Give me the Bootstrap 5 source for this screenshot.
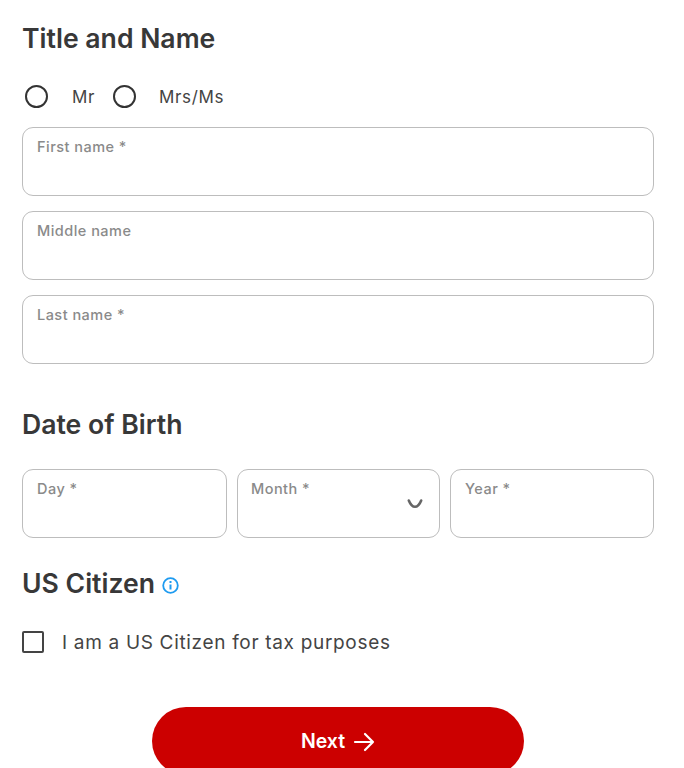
<!doctype html>
<html lang="en"><head><meta charset="utf-8"><title>Form</title>
<link href="https://cdn.jsdelivr.net/npm/bootstrap@5.3.0/dist/css/bootstrap.min.css" rel="stylesheet">
<style>
html,body{height:768px;overflow:hidden}
body{font-family:Inter,"Liberation Sans",sans-serif;color:#333;background:#fff}
.page-wrap{width:632px;margin-left:22px;padding-top:20px}
.sec-title{font-family:Inter,sans-serif;font-size:26.6px;font-weight:600;line-height:36px;color:#383838;margin:0}
.radio-row{margin-top:28px;height:26px;padding-left:3px}
.radio-row .form-check-input{width:23px;height:23px;margin:0 0 1px;border:2.5px solid #333;background-color:#fff;flex:none}
.radio-row label{font-size:17px;line-height:24px;margin-left:24px;margin-right:18px;letter-spacing:.65px;color:#444}
.radio-row label.last{margin-left:23px}
.fields{margin-top:17px;gap:15px}
.field-box{position:relative;height:69px;border:1px solid #bdbdbd;border-radius:11px;background:#fff;padding:9px 14px 0}
.field-box label{display:block;font-size:14.5px;line-height:20px;font-weight:500;color:#8a8a8a;letter-spacing:.47px}
.field-box input,.field-box select{display:block;width:100%;height:30px;padding:0;border:0;background:transparent;outline:0;box-shadow:none}
.field-box select{appearance:none}
.chev{position:absolute;right:16px;top:28px;width:16px;height:11px;pointer-events:none}
.dob-title{margin-top:42px}
.dob-row{margin-top:27px;gap:10px}
.dob-row .field-box{flex:0 0 203px;min-width:0}
.dob-row .field-box.dob-day{flex-basis:205px}
.dob-row .field-box.dob-year{flex-basis:204px}
.dob-month label{margin-left:-1px}
.cit-title{margin-top:27px}
.info-ic{width:17px;height:17px;margin-left:7px;margin-top:4px}
.check-row{margin-top:30px;height:24px}
.check-row .form-check-input{width:22px;height:22px;margin:0 0 3px;border:2px solid #444;border-radius:2px;flex:none}
.check-row label{font-size:19px;line-height:24px;margin-left:18px;letter-spacing:.68px;color:#444}
.next-wrap{margin-top:52px}
.next-btn{width:372px;height:68px;border-radius:34px;background:#cc0000;border:0;color:#fff;font-size:19.5px;font-weight:600;padding:2px 0 0}
.next-btn:hover{background:#cc0000;color:#fff}
.next-btn svg{width:22px;height:20px;margin-left:8px}
</style></head>
<body>
<form class="page-wrap">
<h2 class="sec-title">Title and Name</h2>
<div class="radio-row d-flex align-items-center">
<input class="form-check-input" type="radio" name="t" id="mr"><label for="mr">Mr</label>
<input class="form-check-input" type="radio" name="t" id="mrs"><label class="last" for="mrs">Mrs/Ms</label>
</div>
<div class="fields d-flex flex-column">
<div class="field-box"><label for="f1">First name *</label><input id="f1" type="text"></div>
<div class="field-box"><label for="f2">Middle name</label><input id="f2" type="text"></div>
<div class="field-box"><label for="f3">Last name *</label><input id="f3" type="text"></div>
</div>
<h2 class="sec-title dob-title">Date of Birth</h2>
<div class="dob-row d-flex">
<div class="field-box dob-day"><label for="d">Day *</label><input id="d" type="text"></div>
<div class="field-box dob-month"><label for="m">Month *</label><select id="m"><option></option></select>
<svg class="chev" viewBox="0 0 16 11" fill="none" stroke="#666" stroke-width="2.6" stroke-linecap="round" stroke-linejoin="round"><path d="M1.8 2.5C3.2 6 5.5 8.8 8 8.8S12.8 6 14.2 2.5"/></svg></div>
<div class="field-box dob-year"><label for="y">Year *</label><input id="y" type="text"></div>
</div>
<div class="cit-title d-flex align-items-center">
<h2 class="sec-title">US Citizen</h2>
<svg class="info-ic" viewBox="0 0 17 17" fill="none" stroke="#1e9bf0" stroke-width="1.8"><circle cx="8.5" cy="8.5" r="7.3"/><path d="M8.5 7.5v5" stroke-width="2"/><path d="M8.5 4v2" stroke-width="2"/></svg>
</div>
<div class="check-row d-flex align-items-center">
<input class="form-check-input" type="checkbox" id="c"><label for="c">I am a US Citizen for tax purposes</label>
</div>
<div class="next-wrap d-flex justify-content-center">
<button type="button" class="btn next-btn d-flex align-items-center justify-content-center">Next<svg viewBox="0 0 22 20" fill="none" stroke="#fff" stroke-width="2.2" stroke-linecap="round" stroke-linejoin="round"><path d="M2 10h18M12 2l8 8-8 8"/></svg></button>
</div>
</form>
<script src="https://cdn.jsdelivr.net/npm/bootstrap@5.3.0/dist/js/bootstrap.bundle.min.js"></script>
</body></html>
